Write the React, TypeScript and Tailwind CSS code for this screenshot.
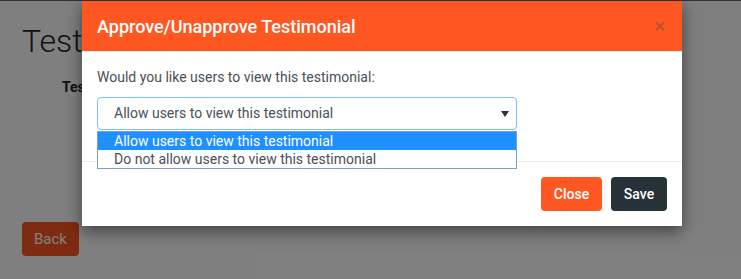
import { useState } from 'react';

const options = [
    'Allow users to view this testimonial',
    'Do not allow users to view this testimonial',
];

export default function App() {
    const [selected] = useState(0);

    return (
        <div className="relative h-[279px] w-full overflow-hidden bg-white font-['Roboto',sans-serif]">
            {/* page behind the modal */}
            <div className="h-px bg-[#5a6a74]" />
            <div className="px-[22px] pt-[20px]">
                <h1 className="text-[32px] font-light leading-[40px] text-[#212529]">Testimonials</h1>
                <p className="mt-[16px] pl-[40px] text-[14px] font-bold leading-[20px] text-[#212529]">Testimonial</p>
                <button className="mt-[125px] h-[34px] w-[57px] rounded-[4px] bg-[#ff5722] text-[15px] text-white">
                    Back
                </button>
            </div>

            {/* backdrop */}
            <div className="absolute inset-0 bg-black/50" />

            {/* modal */}
            <div className="absolute left-[82px] top-px w-[600px] bg-white shadow-[0_5px_15px_rgba(0,0,0,0.5)]">
                <div className="flex h-[51px] items-center justify-between border-b border-[#e9ecef] bg-[#ff5722] px-[15px]">
                    <h5 className="text-[18px] font-medium text-white">Approve/Unapprove Testimonial</h5>
                    <span className="mr-[2px] text-[20px] font-bold leading-none text-[#c4502c]">×</span>
                </div>

                <div className="px-[15px] pb-[31px] pt-[15px]">
                    <label className="block text-[14px] leading-[21px] text-[#495057]">
                        Would you like users to view this testimonial:
                    </label>
                    <div className="relative mt-[9px] w-[420px]">
                        <div className="flex h-[33px] items-center justify-between rounded-[4px] border border-[#80bdff] pl-[16px] pr-[7px] text-[14px] text-[#495057]">
                            <span>{options[selected]}</span>
                            <svg width="8" height="6" viewBox="0 0 8 6">
                                <path d="M0 0h8L4 6z" fill="#333" />
                            </svg>
                        </div>
                        <div className="absolute left-0 top-[34px] z-10 w-[420px] border border-[#7a9cd3] bg-white">
                            {options.map((opt, i) => (
                                <div
                                    key={opt}
                                    className={
                                        i === selected
                                            ? 'h-[18px] bg-[#1e90ff] pl-[16px] text-[14px] leading-[18px] text-white'
                                            : 'h-[18px] pl-[16px] text-[14px] leading-[18px] text-[#495057]'
                                    }
                                >
                                    {opt}
                                </div>
                            ))}
                        </div>
                    </div>
                </div>

                <div className="flex justify-end gap-[9px] border-t border-[#e9ecef] px-[15px] pb-[15px] pt-[15px]">
                    <button className="h-[34px] w-[61px] rounded-[4px] bg-[#ff5722] text-[14px] font-medium text-white">
                        Close
                    </button>
                    <button className="h-[34px] w-[56px] rounded-[4px] bg-[#263238] text-[14px] font-medium text-white">
                        Save
                    </button>
                </div>
            </div>
        </div>
    );
}
